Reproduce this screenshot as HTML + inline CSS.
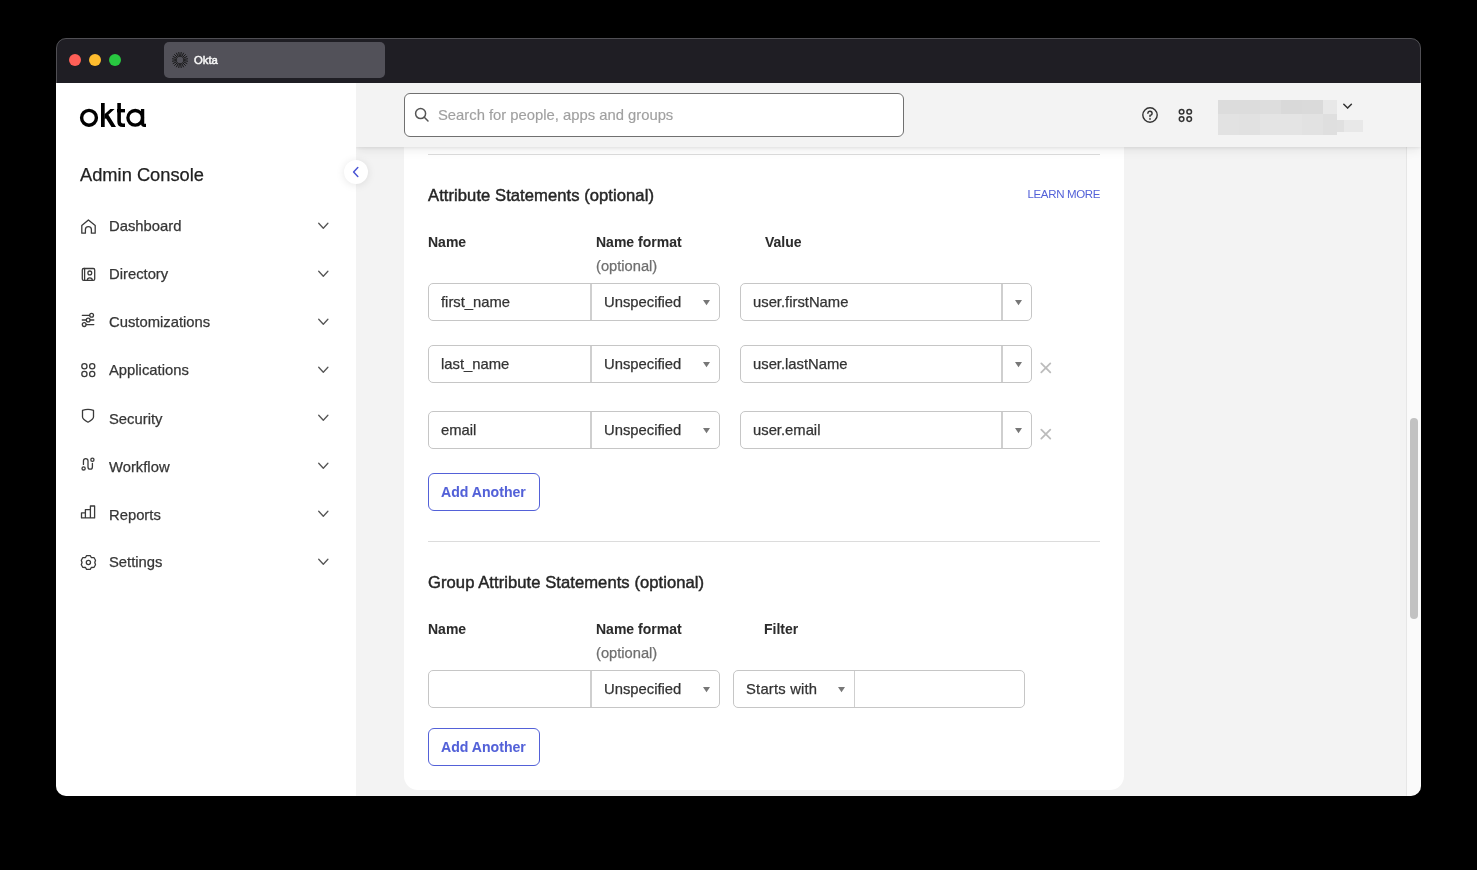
<!DOCTYPE html>
<html><head><meta charset="utf-8">
<style>
*{box-sizing:border-box;margin:0;padding:0}
html,body{width:1477px;height:870px;background:#000;overflow:hidden;font-family:"Liberation Sans",sans-serif;position:relative}
#win{position:absolute;left:0;top:0;width:1477px;height:870px;clip-path:inset(38px 56px 74px 56px round 10px);will-change:transform}
.a{position:absolute}
.t{position:absolute;white-space:nowrap;line-height:1;-webkit-text-stroke:0.25px currentColor}
.bt,.lab{-webkit-text-stroke:0.05px currentColor}
svg{position:absolute;overflow:visible}
.dot{position:absolute;width:12px;height:12px;border-radius:50%;top:54px}
.nav{font-size:14.8px;color:#363636;left:109px}
.ch{left:318px}
.h2{font-size:16.6px;color:#262626;-webkit-text-stroke:0.45px currentColor;letter-spacing:0.06px}
.lab{font-size:14px;font-weight:bold;color:#2b2b2b}
.opt{font-size:14.7px;color:#6f6f6f}
.box{position:absolute;height:38px;border:1px solid #c6c6c6;border-radius:5px;background:#fff}
.vt{font-size:14.8px;color:#333}
.btn{position:absolute;border:1px solid #5361d8;border-radius:6px;background:#fff}
.bt{font-size:14.1px;font-weight:bold;color:#5361d8}
</style></head><body>
<div id="win">
  <!-- title bar -->
  <div class="a" style="left:56px;top:38px;width:1365px;height:45px;background:#1f1e24"></div>
  <div class="dot" style="left:69px;background:#fe5f57"></div>
  <div class="dot" style="left:89px;background:#febc2e"></div>
  <div class="dot" style="left:109px;background:#28c840"></div>
  <div class="a" style="left:164px;top:42px;width:221px;height:36px;background:#525159;border-radius:5px"></div>
  <svg style="left:172px;top:51.7px" width="16" height="16" viewBox="0 0 16 16"><path d="M11.65 8.58L15.61 9.20M11.30 9.68L14.86 11.50M10.62 10.62L13.44 13.44M9.68 11.30L11.50 14.86M8.58 11.65L9.20 15.61M7.42 11.65L6.80 15.61M6.32 11.30L4.50 14.86M5.38 10.62L2.56 13.44M4.70 9.68L1.14 11.50M4.35 8.58L0.39 9.20M4.35 7.42L0.39 6.80M4.70 6.32L1.14 4.50M5.38 5.38L2.56 2.56M6.32 4.70L4.50 1.14M7.42 4.35L6.80 0.39M8.58 4.35L9.20 0.39M9.68 4.70L11.50 1.14M10.62 5.38L13.44 2.56M11.30 6.32L14.86 4.50M11.65 7.42L15.61 6.80" stroke="#111" stroke-width="0.9" stroke-linecap="round"/></svg>
  <div class="t" style="left:194px;top:54.5px;font-size:11.3px;color:#f6f6f6;-webkit-text-stroke:0.5px currentColor">Okta</div>

  <!-- sidebar -->
  <div class="a" style="left:56px;top:83px;width:300px;height:713px;background:#fff"></div>
  <svg style="left:80px;top:103px" width="66" height="24" viewBox="0 0 66 24">
    <circle cx="9" cy="14.8" r="7.4" fill="none" stroke="#000" stroke-width="3.4"/>
    <rect x="21" y="0" width="3.7" height="24" fill="#000"/>
    <path d="M24.5 11.3L30.4 6H34.6L28.4 11.7L36 24H31.5L25.9 15.3L24.5 16.5Z" fill="#000"/>
    <path d="M39.1 0V18.5Q39.1 22.3 42.9 22.3H45" fill="none" stroke="#000" stroke-width="3.6"/>
    <rect x="37" y="6" width="8" height="3.4" fill="#000"/>
    <circle cx="55.2" cy="14.8" r="7.3" fill="none" stroke="#000" stroke-width="3.3"/>
    <path d="M62.6 6V20.5Q62.6 22.3 64.4 22.3H66" fill="none" stroke="#000" stroke-width="3.3"/>
  </svg>
  <div class="t" style="left:80px;top:166px;font-size:18.3px;color:#222">Admin Console</div>

  <!-- nav -->
  <div class="t nav" style="top:219px">Dashboard</div>
  <div class="t nav" style="top:267px">Directory</div>
  <div class="t nav" style="top:315px">Customizations</div>
  <div class="t nav" style="top:363px">Applications</div>
  <div class="t nav" style="top:412px">Security</div>
  <div class="t nav" style="top:460px">Workflow</div>
  <div class="t nav" style="top:508px">Reports</div>
  <div class="t nav" style="top:555px">Settings</div>
  <svg style="left:0;top:0" width="400" height="600" viewBox="0 0 400 600">
    <g fill="none" stroke="#3a3a3a" stroke-width="1.3" stroke-linejoin="round" stroke-linecap="round">
      <!-- home -->
      <path d="M81.8 225.4L88.4 219.9L95.2 225.4V233.2H91.4V229.6A3 3 0 0 0 85.4 229.6V233.2H81.8Z"/>
      <!-- directory -->
      <rect x="82.3" y="268.5" width="12.4" height="11.8" rx="1.4"/>
      <path d="M84.6 268.5V280.3"/>
      <circle cx="89.8" cy="272.9" r="1.9"/>
      <path d="M87.3 280.4A2.5 2.5 0 0 1 92.3 280.4"/>
      <!-- customizations -->
      <path d="M82.3 315.3H89.6M82.3 320H86.1M90 320H93.8M86.2 324.6H93.8"/>
      <circle cx="91.6" cy="315.3" r="1.9"/>
      <circle cx="88.2" cy="320" r="1.9"/>
      <circle cx="84.2" cy="324.6" r="1.9"/>
      <!-- applications -->
      <circle cx="84.4" cy="366.3" r="2.6"/>
      <circle cx="92.2" cy="366.3" r="2.6"/>
      <circle cx="84.4" cy="374" r="2.6"/>
      <circle cx="92.2" cy="374" r="2.6"/>
      <!-- security -->
      <path d="M82.5 410.4Q88 408.5 93.5 410.4V417Q93.5 419.3 88 422.2Q82.5 419.3 82.5 417Z"/>
      <!-- workflow -->
      <path d="M83.45 464.4V460.8A2.28 2.28 0 0 1 88 460.8V467A2.2 2.2 0 0 0 92.4 467V463.4"/>
      <circle cx="83.6" cy="468.4" r="1.6"/>
      <circle cx="92.4" cy="459.7" r="1.6"/>
      <!-- reports -->
      <path d="M81.5 517.9V512.8H85.4V517.9ZM85.4 517.9V509.6H90.4V517.9ZM90.4 517.9V506H94.6V517.9Z"/>
      <!-- settings -->
      <path d="M86.6 555.6L90.2 555.6L91.3 557.5L94.1 557.7L95.5 560.2L94.8 562.5L95.5 564.8L94.1 567.3L91.3 567.5L90.2 569.4L86.6 569.4L85.5 567.5L82.7 567.3L81.3 564.8L82 562.5L81.3 560.2L82.7 557.7L85.5 557.5Z"/>
      <circle cx="88.4" cy="562.5" r="2.1"/>
    </g>
    <g fill="none" stroke="#555" stroke-width="1.3" stroke-linecap="round" stroke-linejoin="round">
      <path d="M318.7 223.3L323.3 228.2L327.9 223.3"/>
      <path d="M318.7 271.3L323.3 276.2L327.9 271.3"/>
      <path d="M318.7 319.3L323.3 324.2L327.9 319.3"/>
      <path d="M318.7 367.3L323.3 372.2L327.9 367.3"/>
      <path d="M318.7 415.3L323.3 420.2L327.9 415.3"/>
      <path d="M318.7 463.3L323.3 468.2L327.9 463.3"/>
      <path d="M318.7 511.3L323.3 516.2L327.9 511.3"/>
      <path d="M318.7 559.3L323.3 564.2L327.9 559.3"/>
    </g>
  </svg>

  <!-- main bg -->
  <div class="a" style="left:356px;top:83px;width:1065px;height:713px;background:#f3f3f3"></div>
  <!-- scrollbar -->
  <div class="a" style="left:1406px;top:147px;width:15px;height:649px;background:#fafafa;border-left:1px solid #e6e6e6"></div>
  <div class="a" style="left:1410px;top:418px;width:8px;height:201px;background:#c2c2c2;border-radius:4px"></div>

  <!-- card -->
  <div class="a" style="left:404px;top:83px;width:720px;height:707px;background:#fff;border-radius:0 0 14px 14px"></div>
  <div class="a" style="left:428px;top:154px;width:672px;height:1px;background:#dcdcdc"></div>

  <div class="t h2" style="left:428px;top:188px">Attribute Statements (optional)</div>
  <div class="t" style="left:1027.5px;top:189px;font-size:11.5px;letter-spacing:-0.35px;color:#5361d8;-webkit-text-stroke:0">LEARN MORE</div>

  <div class="t lab" style="left:428px;top:235px">Name</div>
  <div class="t lab" style="left:596px;top:235px">Name format</div>
  <div class="t lab" style="left:765px;top:235px">Value</div>
  <div class="t opt" style="left:596px;top:259px">(optional)</div>

  <!-- row 1 -->
  <div class="box" style="left:428px;top:283px;width:292px"></div>
  <div class="a" style="left:590px;top:284px;width:2px;height:36px;background:#cfcfcf"></div>
  <div class="t vt" style="left:441px;top:295px">first_name</div>
  <div class="t vt" style="left:604px;top:295px">Unspecified</div>
  <div class="box" style="left:740px;top:283px;width:292px"></div>
  <div class="a" style="left:1001px;top:284px;width:2px;height:36px;background:#cfcfcf"></div>
  <div class="t vt" style="left:753px;top:295px">user.firstName</div>

  <!-- row 2 -->
  <div class="box" style="left:428px;top:345px;width:292px"></div>
  <div class="a" style="left:590px;top:346px;width:2px;height:36px;background:#cfcfcf"></div>
  <div class="t vt" style="left:441px;top:357px">last_name</div>
  <div class="t vt" style="left:604px;top:357px">Unspecified</div>
  <div class="box" style="left:740px;top:345px;width:292px"></div>
  <div class="a" style="left:1001px;top:346px;width:2px;height:36px;background:#cfcfcf"></div>
  <div class="t vt" style="left:753px;top:357px">user.lastName</div>

  <!-- row 3 -->
  <div class="box" style="left:428px;top:411px;width:292px"></div>
  <div class="a" style="left:590px;top:412px;width:2px;height:36px;background:#cfcfcf"></div>
  <div class="t vt" style="left:441px;top:423px">email</div>
  <div class="t vt" style="left:604px;top:423px">Unspecified</div>
  <div class="box" style="left:740px;top:411px;width:292px"></div>
  <div class="a" style="left:1001px;top:412px;width:2px;height:36px;background:#cfcfcf"></div>
  <div class="t vt" style="left:753px;top:423px">user.email</div>

  <svg style="left:0;top:0" width="1200" height="800" viewBox="0 0 1200 800">
    <g fill="#777">
      <path d="M703.0 300.0H710.0L706.5 305.2Z"/>
      <path d="M703.0 362.0H710.0L706.5 367.2Z"/>
      <path d="M703.0 428.0H710.0L706.5 433.2Z"/>
      <path d="M1015.0 300.0H1022.0L1018.5 305.2Z"/>
      <path d="M1015.0 362.0H1022.0L1018.5 367.2Z"/>
      <path d="M1015.0 428.0H1022.0L1018.5 433.2Z"/>
    </g>
    <g stroke="#bcbcbc" stroke-width="1.8" stroke-linecap="round">
      <path d="M1041.3 363.4L1050.3 372.4M1050.3 363.4L1041.3 372.4"/>
      <path d="M1041.3 429.6L1050.3 438.6M1050.3 429.6L1041.3 438.6"/>
    </g>
  </svg>

  <div class="btn" style="left:428px;top:473px;width:112px;height:38px"></div>
  <div class="t bt" style="left:441px;top:485px">Add Another</div>

  <div class="a" style="left:428px;top:541px;width:672px;height:1px;background:#dcdcdc"></div>
  <div class="t h2" style="left:428px;top:575px">Group Attribute Statements (optional)</div>
  <div class="t lab" style="left:428px;top:622px">Name</div>
  <div class="t lab" style="left:596px;top:622px">Name format</div>
  <div class="t lab" style="left:764px;top:622px">Filter</div>
  <div class="t opt" style="left:596px;top:646px">(optional)</div>

  <div class="box" style="left:428px;top:670px;width:292px"></div>
  <div class="a" style="left:590px;top:671px;width:2px;height:36px;background:#cfcfcf"></div>
  <div class="t vt" style="left:604px;top:682px">Unspecified</div>
  <div class="box" style="left:733px;top:670px;width:292px"></div>
  <div class="a" style="left:854px;top:671px;width:1px;height:36px;background:#cfcfcf"></div>
  <div class="t vt" style="left:746px;top:682px;letter-spacing:0.2px">Starts with</div>

  <svg style="left:0;top:0" width="1200" height="800" viewBox="0 0 1200 800"><g fill="#777">
      <path d="M703.0 687.0H710.0L706.5 692.2Z"/>
      <path d="M838.0 687.0H845.0L841.5 692.2Z"/></g></svg>
  <div class="btn" style="left:428px;top:728px;width:112px;height:38px"></div>
  <div class="t bt" style="left:441px;top:740px">Add Another</div>

  <!-- topbar -->
  <div class="a" style="left:356px;top:83px;width:1065px;height:64px;background:#f3f3f3;box-shadow:0 1px 3px rgba(0,0,0,.07),0 3px 10px rgba(0,0,0,.08);clip-path:inset(0 0 -30px 0)"></div>
  <div class="a" style="left:404px;top:93px;width:500px;height:44px;border:1px solid #707070;border-radius:6px;background:#fff"></div>
  <svg style="left:414px;top:107px" width="16" height="16" viewBox="0 0 16 16">
    <circle cx="6.6" cy="6.6" r="5" fill="none" stroke="#555" stroke-width="1.5"/>
    <path d="M10.3 10.3L14 14" stroke="#555" stroke-width="1.5" stroke-linecap="round"/>
  </svg>
  <div class="t" style="left:438px;top:108px;font-size:14.8px;color:#a0a0a0;-webkit-text-stroke:0.15px currentColor">Search for people, apps and groups</div>

  <svg style="left:1140px;top:105px" width="60" height="20" viewBox="0 0 60 20">
    <circle cx="10" cy="10" r="7.2" fill="none" stroke="#333" stroke-width="1.4"/>
    <path d="M7.9 8.2A2.1 2.1 0 1 1 10 10.4V11.6" fill="none" stroke="#333" stroke-width="1.4" stroke-linecap="round"/>
    <circle cx="10" cy="13.9" r="0.9" fill="#333"/>
    <g fill="none" stroke="#333" stroke-width="1.5">
      <circle cx="41.6" cy="6.7" r="2.3"/><circle cx="49.2" cy="6.7" r="2.3"/>
      <circle cx="41.6" cy="14.1" r="2.3"/><circle cx="49.2" cy="14.1" r="2.3"/>
    </g>
  </svg>
  <!-- blurred user -->
  <div class="a" style="left:1218px;top:100px;width:21px;height:14px;background:#dcdcdc"></div>
  <div class="a" style="left:1218px;top:114px;width:21px;height:21px;background:#e2e2e2"></div>
  <div class="a" style="left:1239px;top:100px;width:21px;height:14px;background:#dcdcdc"></div>
  <div class="a" style="left:1239px;top:114px;width:21px;height:21px;background:#e1e1e1"></div>
  <div class="a" style="left:1260px;top:100px;width:21px;height:14px;background:#dddddd"></div>
  <div class="a" style="left:1260px;top:114px;width:21px;height:21px;background:#e4e4e4"></div>
  <div class="a" style="left:1281px;top:100px;width:21px;height:14px;background:#d9d9d9"></div>
  <div class="a" style="left:1281px;top:114px;width:21px;height:21px;background:#e4e4e4"></div>
  <div class="a" style="left:1302px;top:100px;width:21px;height:14px;background:#dadada"></div>
  <div class="a" style="left:1302px;top:114px;width:21px;height:21px;background:#e2e2e2"></div>
  <div class="a" style="left:1323px;top:100px;width:14px;height:14px;background:#e8e8e8"></div>
  <div class="a" style="left:1323px;top:114px;width:14px;height:21px;background:#dfdfdf"></div>
  <div class="a" style="left:1337px;top:120px;width:7px;height:12px;background:#e0e0e0"></div>
  <div class="a" style="left:1344px;top:120px;width:19px;height:12px;background:#e8e8e8"></div>
  <svg style="left:1340px;top:100px" width="16" height="12" viewBox="0 0 16 12">
    <path d="M3.8 4.2L7.6 8.1L11.4 4.2" fill="none" stroke="#333" stroke-width="1.5" stroke-linecap="round" stroke-linejoin="round"/>
  </svg>

  <!-- collapse button -->
  <div class="a" style="left:344px;top:159.5px;width:24px;height:24px;border-radius:50%;background:#fff;box-shadow:0 1px 8px rgba(0,0,0,.1)"></div>
  <svg style="left:344px;top:159.5px" width="24" height="24" viewBox="0 0 24 24">
    <path d="M13.8 7.6L9.6 12L13.8 16.4" fill="none" stroke="#4a55d4" stroke-width="1.5" stroke-linecap="round" stroke-linejoin="round"/>
  </svg>
</div>
<div class="a" style="left:56px;top:38px;width:1365px;height:758px;border-radius:10px;border:1px solid rgba(255,255,255,.22);pointer-events:none"></div>
</body></html>
